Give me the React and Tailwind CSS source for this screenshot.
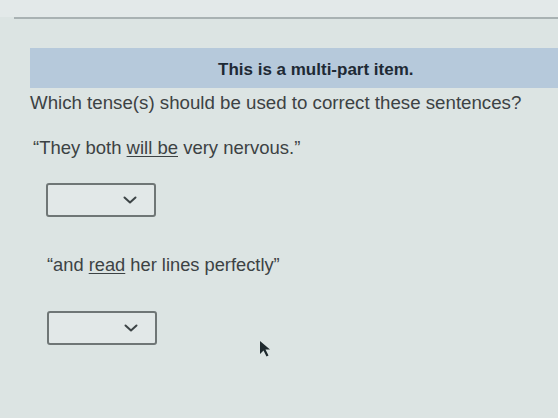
const Select = () => (
    <div className="w-[110px] h-[34px] border-2 border-[#6f7676] rounded-[3px] bg-[#e2e8e8] flex items-center justify-end pr-[17px]">
        <svg width="14" height="8" viewBox="0 0 14 8" fill="none">
            <polyline points="1.5,1.5 7,6.5 12.5,1.5" stroke="#3d4446" strokeWidth="2" strokeLinecap="round" strokeLinejoin="round" />
        </svg>
    </div>
);

const App = () => {
    return (
        <div className="w-[558px] h-[418px] bg-[#dce4e3] overflow-hidden relative text-[#3c4244]" style={{ fontFamily: '"Liberation Sans", Arial, sans-serif' }}>
            <div className="h-[17px] bg-[#e3e9e9]" />
            <div className="h-[2px] bg-[#a9b2b3] ml-[14px]" />
            <div className="pl-[30px] pt-[29px]">
                <div className="h-[40px] bg-[#b6c9db] flex items-end pb-[6px] pl-[188px]">
                    <span className="font-bold text-[17px] text-[#1e2a35]">This is a multi-part item.</span>
                </div>
                <p className="text-[18.7px] mt-[1px]">Which tense(s) should be used to correct these sentences?</p>
                <p className="text-[18.5px] mt-[17px] ml-[3px]">
                    “They both <span className="underline underline-offset-2">will be</span> very nervous.”
                </p>
                <div className="mt-[21px] ml-[16px]">
                    <Select />
                </div>
                <p className="text-[18.3px] mt-[34px] ml-[17px]">
                    “and <span className="underline underline-offset-2">read</span> her lines perfectly”
                </p>
                <div className="mt-[33px] ml-[17px]">
                    <Select />
                </div>
            </div>
            <svg className="absolute left-[259px] top-[340px]" width="14" height="18" viewBox="0 0 14 18">
                <path d="M1 1 L1 14 L4.5 10.5 L7.5 16.5 L9.5 15.5 L6.5 9.5 L11 9.5 Z" fill="#1f2a2e" />
            </svg>
        </div>
    );
};
export default App;
